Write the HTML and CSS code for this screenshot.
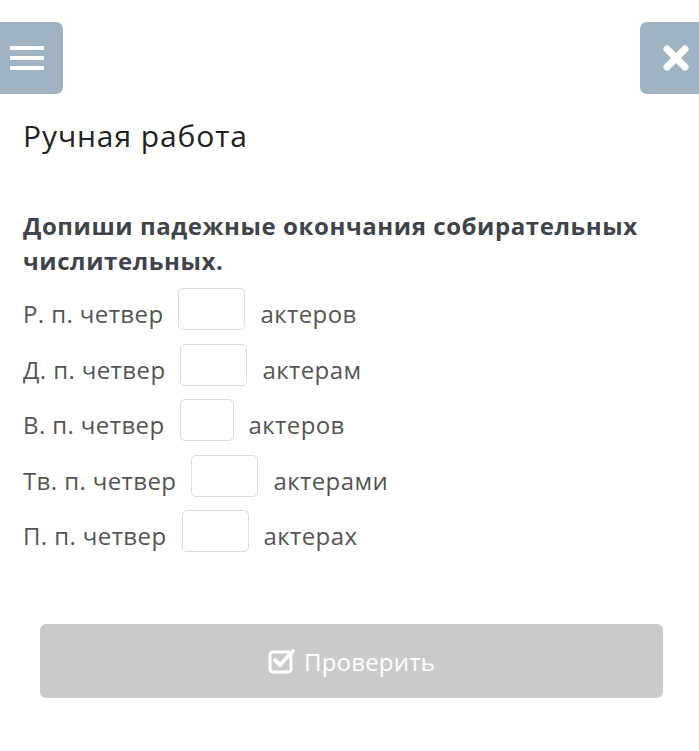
FILE: index.html
```html
<!DOCTYPE html>
<html><head>
<meta charset="utf-8"><title>Ручная работа</title>
<link rel="stylesheet" href="styles.css">
</head>
<body>
<div class="topbar">
<div class="menubtn">
<svg width="34" height="28" viewBox="0 0 34 28"><rect x="0" y="2" width="34" height="4" fill="#fff"/><rect x="0" y="12" width="34" height="4" fill="#fff"/><rect x="0" y="22" width="34" height="4" fill="#fff"/></svg>
</div>
<div class="closebtn">
<svg width="28" height="28" viewBox="0 0 28 28"><path d="M5 5 L23 23 M23 5 L5 23" stroke="#fff" stroke-width="7" stroke-linecap="round"/></svg>
</div>
</div>
<div class="content">
<h1 class="titolo">Ручная работа</h1>
<p class="domanda">Допиши падежные окончания собирательных числительных.</p>
<div class="riga">Р. п. четвер <span class="casella"></span> актеров</div>
<div class="riga">Д. п. четвер <span class="casella"></span> актерам</div>
<div class="riga">В. п. четвер <span class="casella stretta"></span> актеров</div>
<div class="riga">Тв. п. четвер <span class="casella"></span> актерами</div>
<div class="riga">П. п. четвер <span class="casella"></span> актерах</div>
</div>
<div class="pulsante">
<svg width="28" height="26" viewBox="0 0 28 26"><rect x="2" y="4" width="21" height="20" rx="3" fill="none" stroke="#fff" stroke-width="3"/><path d="M7 12 L12 17 L25 3" fill="none" stroke="#fff" stroke-width="4" stroke-linecap="round" stroke-linejoin="round"/></svg>
<span>Проверить</span>
</div>
</body></html>
```
FILE: styles.css
```css
body {
margin: 0;
background-color: #fff;
font-family: "Open Sans", "Liberation Sans", sans-serif;
}
.topbar {
display: flex;
justify-content: space-between;
padding-top: 22px;
}
.menubtn {
width: 63px;
height: 72px;
background-color: #9fb3c2;
border-radius: 0 7px 7px 0;
display: flex;
align-items: center;
padding-left: 10px;
box-sizing: border-box;
}
.closebtn {
width: 59px;
height: 72px;
background-color: #9fb3c2;
border-radius: 7px 0 0 7px;
display: flex;
align-items: center;
padding-left: 22px;
box-sizing: border-box;
}
.content {
padding: 0 23px;
}
.titolo {
font-weight: normal;
font-size: 30px;
letter-spacing: 0.9px;
color: #222;
margin: 22px 0 0;
line-height: 40px;
}
.domanda {
font-weight: bold;
font-size: 24px;
letter-spacing: 0.58px;
line-height: 35px;
color: #3e4449;
margin: 52px 0 10px;
}
.riga {
display: flex;
align-items: flex-end;
gap: 15px;
font-size: 24px;
letter-spacing: 0.4px;
color: #555;
height: 42px;
margin-bottom: 13.5px;
}
.casella {
display: inline-block;
width: 65px;
height: 40px;
border: 1px solid #d8dcdf;
border-radius: 5px;
}
.casella.stretta {
width: 52px;
}
.pulsante {
margin: 72px 36px 0 40px;
height: 74px;
background-color: #cacaca;
border-radius: 6px;
display: flex;
align-items: center;
justify-content: center;
gap: 8px;
color: #fff;
font-size: 24px;
letter-spacing: 0.2px;
}
```
